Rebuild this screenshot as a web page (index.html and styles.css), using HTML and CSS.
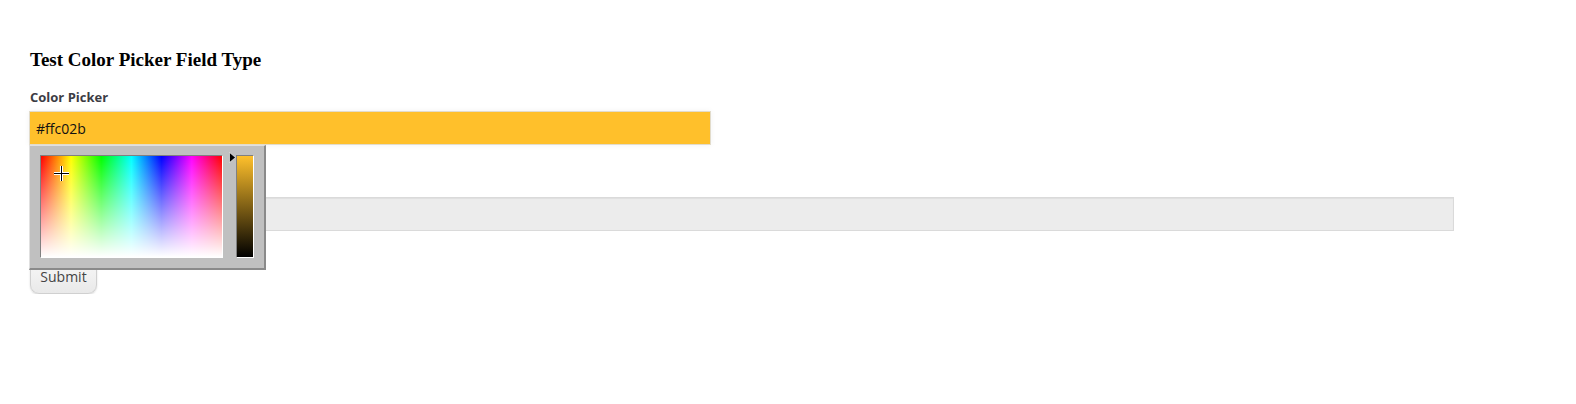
FILE: index.html
```html
<!DOCTYPE html>
<html>
<head>
<meta charset="utf-8">
<title>Test Color Picker Field Type</title>
<link rel="stylesheet" href="styles.css">
</head>
<body>
<div class="page">
  <h3 class="title">Test Color Picker Field Type</h3>
  <form class="form">
    <div class="field">
      <label class="label">Color Picker</label>
      <div class="picker-wrap">
        <input class="input input-color" type="text" value="#ffc02b">
        <div class="picker">
          <div class="pad">
            <svg class="cross" width="17" height="17" viewBox="0 0 17 17">
              <path d="M8.5 1v15M1 8.5h15" stroke="#fff" stroke-width="3"/>
              <path d="M8.5 1v15M1 8.5h15" stroke="#000" stroke-width="1"/>
            </svg>
          </div>
          <div class="slider-col">
            <svg class="arrow" width="7" height="11" viewBox="0 0 7 11">
              <path d="M0.5 0.5L6.5 5.5L0.5 10.5Z" fill="#000" stroke="#fff" stroke-width="0.6"/>
            </svg>
            <div class="slider"></div>
          </div>
        </div>
      </div>
    </div>
    <div class="field field-second">
      <input class="input input-plain" type="text">
    </div>
    <button class="submit" type="button">Submit</button>
  </form>
</div>
</body>
</html>
```
FILE: styles.css
```css
html, body {
  margin: 0;
  padding: 0;
  background: #fff;
}

.page {
  padding: 49px 29px 0 29px;
}

.title {
  font-family: "Liberation Serif", "Times New Roman", serif;
  font-weight: bold;
  font-size: 19px;
  line-height: 22px;
  margin: 0 0 17px 1px;
  color: #000;
}

.form {
  display: flex;
  flex-direction: column;
  align-items: flex-start;
}

.field {
  display: flex;
  flex-direction: column;
}

.label {
  font-family: "Open Sans", "DejaVu Sans", sans-serif;
  font-weight: bold;
  font-size: 13px;
  line-height: 18px;
  color: #3c3c44;
  margin: 0 0 5px 1px;
}

.picker-wrap {
  position: relative;
}

.input {
  box-sizing: border-box;
  height: 34px;
  border: 1px solid #dcdcdc;
  font-family: "Open Sans", "DejaVu Sans", sans-serif;
  font-size: 14px;
  color: #111;
  padding: 0 6px;
  outline: none;
  margin: 0;
  display: block;
}

.input-color {
  width: 682px;
  background: #ffc02b;
  border-color: #e2dccc;
  box-shadow: 0 0 6px rgba(0, 0, 0, 0.05);
}

.field-second {
  margin-top: 52px;
}

.input-plain {
  width: 1425px;
  background: #ececec;
  border-color: #dadada;
  box-shadow: inset 0 1px 1px rgba(0, 0, 0, 0.06);
}

.submit {
  margin-top: 29px;
  margin-left: 1px;
  box-sizing: border-box;
  height: 34px;
  width: 67px;
  font-family: "Open Sans", "DejaVu Sans", sans-serif;
  font-size: 14px;
  color: #444;
  background: linear-gradient(#f7f7f7, #e9e9e9);
  border: 1px solid #d0d0d0;
  border-radius: 9px;
  box-shadow: 0 1px 2px rgba(0, 0, 0, 0.15);
  padding: 0 0 1px 0;
  line-height: 20px;
}

.picker {
  position: absolute;
  left: 0;
  top: 34px;
  box-sizing: border-box;
  width: 237px;
  height: 125px;
  background: #c0c0c0;
  border-style: solid;
  border-width: 1px 2px 2px 1px;
  border-color: #e0e0e0 #8a8a8a #8a8a8a #e0e0e0;
  padding: 9px 10px 10px 10px;
  display: flex;
  gap: 13px;
  z-index: 5;
}

.pad {
  position: relative;
  box-sizing: border-box;
  width: 183px;
  height: 103px;
  border-style: solid;
  border-width: 1px;
  border-color: #808080 #ffffff #ffffff #808080;
  background:
    linear-gradient(to bottom, rgba(255, 255, 255, 0), #ffffff),
    linear-gradient(to right, #ff0000, #ffff00 16.6%, #00ff00 33.3%, #00ffff 50%, #0000ff 66.6%, #ff00ff 83.3%, #ff0000);
}

.cross {
  position: absolute;
  left: 12px;
  top: 9px;
}

.slider-col {
  position: relative;
}

.slider {
  box-sizing: border-box;
  width: 18px;
  height: 103px;
  border-style: solid;
  border-width: 1px;
  border-color: #808080 #ffffff #ffffff #808080;
  background: linear-gradient(to bottom, #ffc02b, #000000);
}

.arrow {
  position: absolute;
  left: -7px;
  top: -3px;
}
```
